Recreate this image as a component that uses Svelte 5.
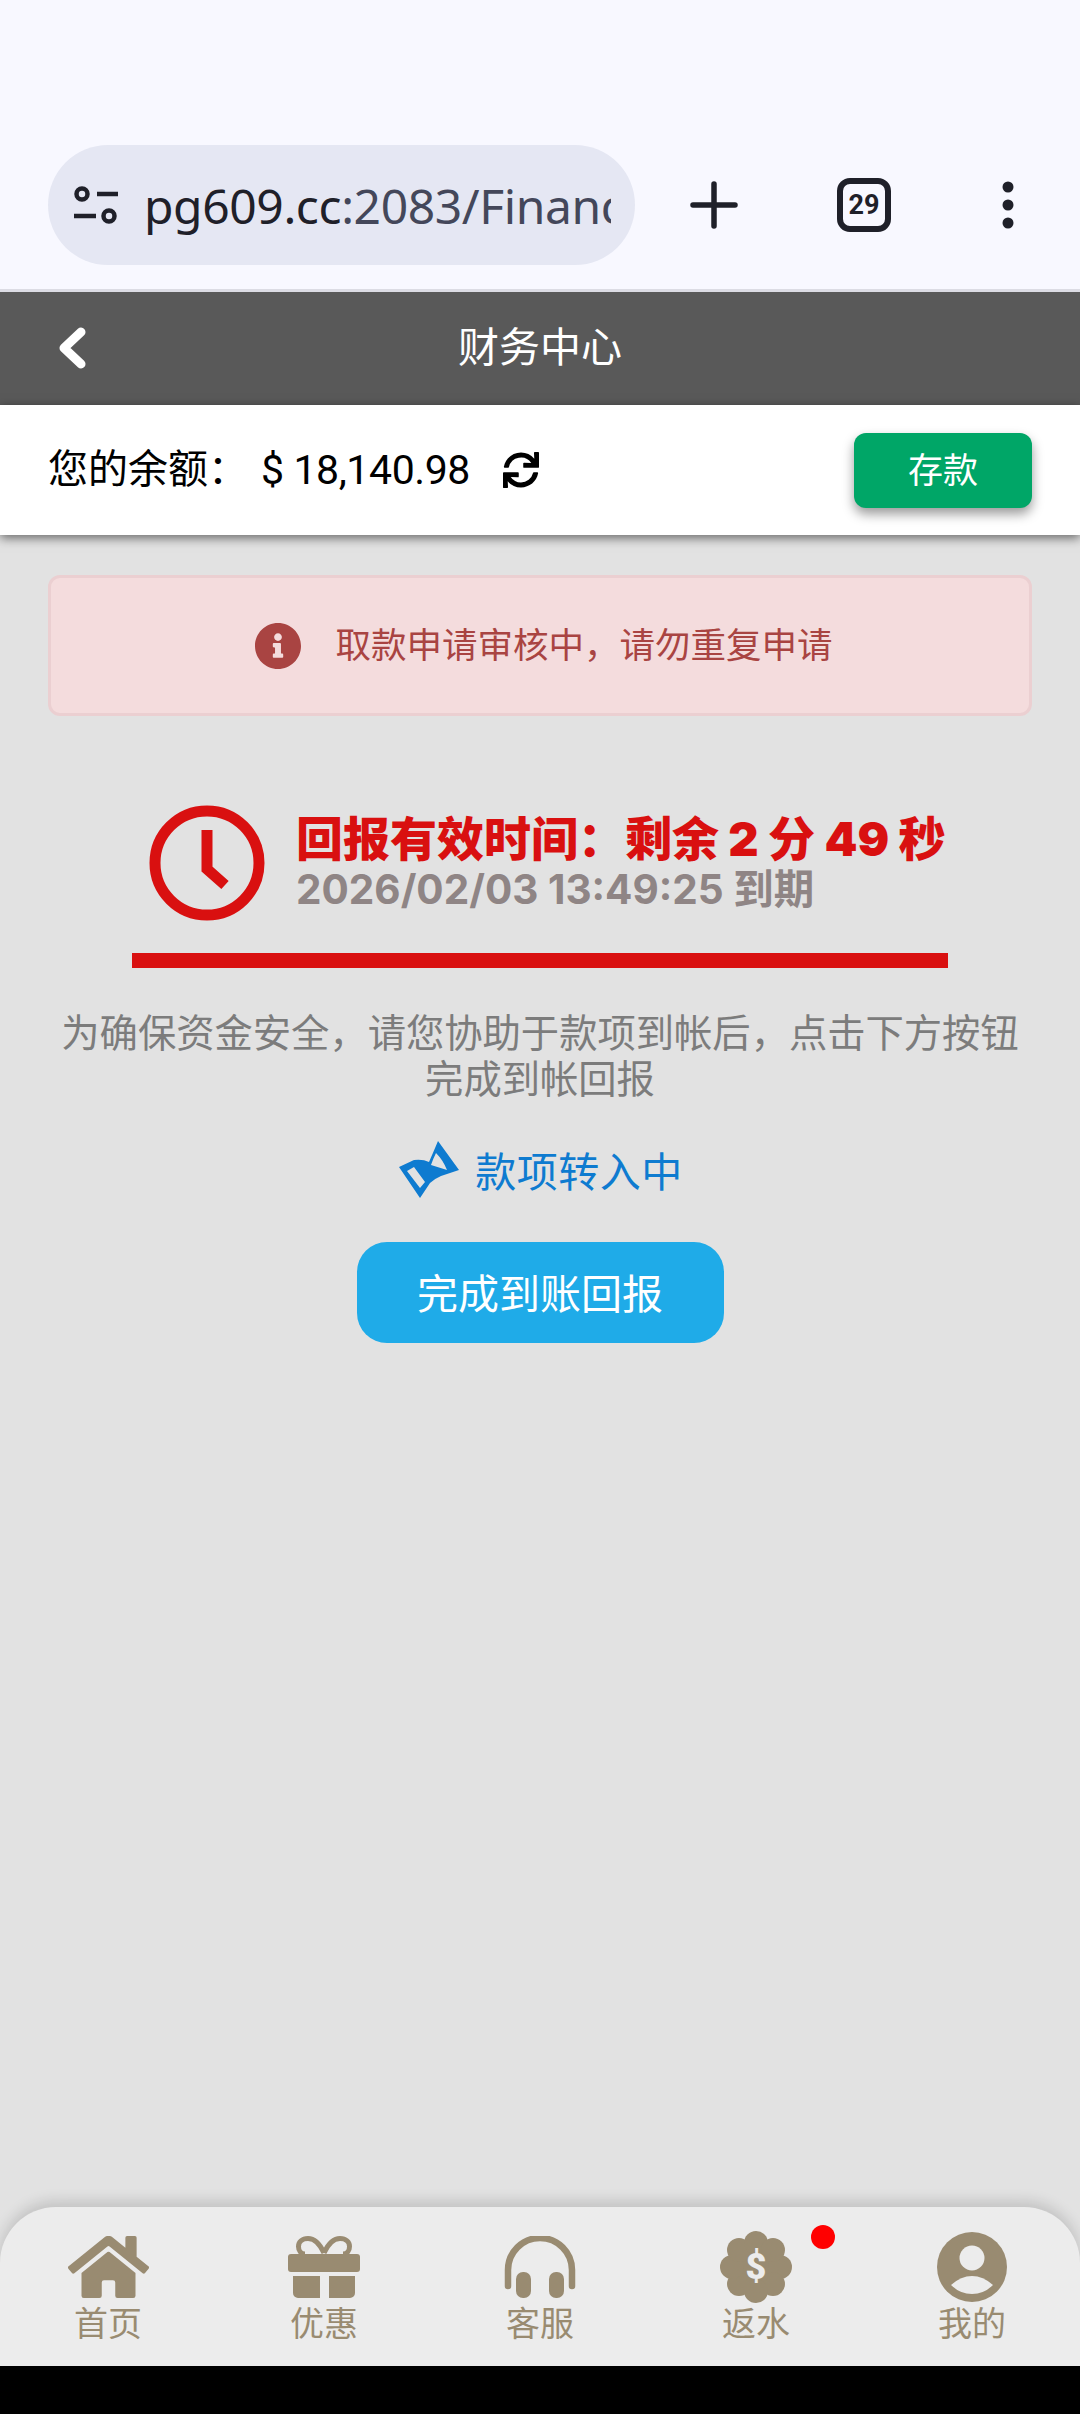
<script>
  const lobes = [0, 45, 90, 135, 180, 225, 270, 315].map((deg) => ({
    x: 36 + 24 * Math.cos((deg * Math.PI) / 180),
    y: 36 + 24 * Math.sin((deg * Math.PI) / 180)
  }));
</script>

<div class="page">
  <div class="chrome">
    <div class="pill">
      <svg class="tune" width="44" height="38" viewBox="0 0 44 38" fill="none" stroke="#1f2029" stroke-width="4.5">
        <circle cx="8" cy="8" r="5.5"></circle>
        <path d="M23 8h21M0 30h22"></path>
        <circle cx="35" cy="30" r="5.5"></circle>
      </svg>
      <div class="url"><span class="host">pg609.cc</span>:2083/Finance</div>
    </div>
    <div class="chrome-actions">
      <svg width="48" height="48" viewBox="0 0 48 48" fill="none" stroke="#1f2029" stroke-width="5.5" stroke-linecap="round">
        <path d="M24 3v42M3 24h42"></path>
      </svg>
      <div class="tabs">29</div>
      <svg class="dots" width="12" height="48" viewBox="0 0 12 48" fill="#1f2029">
        <circle cx="6" cy="6" r="5.5"></circle>
        <circle cx="6" cy="24" r="5.5"></circle>
        <circle cx="6" cy="42" r="5.5"></circle>
      </svg>
    </div>
  </div>

  <header class="topbar">
    <svg class="back" width="30" height="42" viewBox="0 0 30 42" fill="none" stroke="#fff" stroke-width="9" stroke-linecap="round" stroke-linejoin="round">
      <path d="M24 5L7 21l17 16"></path>
    </svg>
    <span>财务中心</span>
  </header>

  <div class="balance">
    <span class="balance-label">您的余额：</span>
    <span class="amount">$ 18,140.98</span>
    <svg class="refresh" width="36" height="36" viewBox="0 0 512 512" fill="#000">
      <path d="M440.65 12.57l4 82.77A247.16 247.16 0 0 0 255.83 8C134.73 8 33.91 94.92 12.29 209.82A12 12 0 0 0 24.09 224h49.05a12 12 0 0 0 11.67-9.26 175.91 175.91 0 0 1 317-56.94l-101.46-4.86a12 12 0 0 0-12.57 12v47.41a12 12 0 0 0 12 12H500a12 12 0 0 0 12-12V12a12 12 0 0 0-12-12h-47.37a12 12 0 0 0-11.98 12.57zM255.83 432a175.61 175.61 0 0 1-146-77.8l101.8 4.87a12 12 0 0 0 12.57-12v-47.4a12 12 0 0 0-12-12H12a12 12 0 0 0-12 12V500a12 12 0 0 0 12 12h47.35a12 12 0 0 0 12-12.6l-4.15-82.57A247.17 247.17 0 0 0 255.83 504c121.11 0 221.93-86.92 243.55-201.82a12 12 0 0 0-11.8-14.18h-49.05a12 12 0 0 0-11.67 9.26A175.86 175.86 0 0 1 255.83 432z"></path>
    </svg>
    <button class="deposit">存款</button>
  </div>

  <main class="content">
    <div class="alert">
      <svg width="46" height="46" viewBox="8 8 496 496" fill="#a94442">
        <path d="M256 8C119.043 8 8 119.083 8 256c0 136.997 111.043 248 248 248s248-111.003 248-248C504 119.083 392.957 8 256 8zm0 110c23.196 0 42 18.804 42 42s-18.804 42-42 42-42-18.804-42-42 18.804-42 42-42zm56 254c0 6.627-5.373 12-12 12h-88c-6.627 0-12-5.373-12-12v-24c0-6.627 5.373-12 12-12h12v-64h-12c-6.627 0-12-5.373-12-12v-24c0-6.627 5.373-12 12-12h64c6.627 0 12 5.373 12 12v100h12c6.627 0 12 5.373 12 12v24z"></path>
      </svg>
      <span>取款申请审核中，请勿重复申请</span>
    </div>

    <div class="timer">
      <svg width="116" height="116" viewBox="0 0 116 116" fill="none" stroke="#d91010" stroke-width="11">
        <circle cx="58" cy="58" r="52"></circle>
        <path d="M58 25v39l18 16" stroke-width="11" stroke-linejoin="miter"></path>
      </svg>
      <div class="timer-text">
        <div class="timer-title">回报有效时间：剩余 2 分 49 秒</div>
        <div class="timer-date">2026/02/03 13:49:25 到期</div>
      </div>
    </div>
    <div class="redline"></div>

    <p class="notice">为确保资金安全，请您协助于款项到帐后，点击下方按钮完成到帐回报</p>

    <div class="pending">
      <svg width="64" height="64" viewBox="16 12 64 64" fill="#0e7bd0" fill-rule="evenodd">
        <path d="M18 40L33 33Q42 32 48 35Q52 26 57 14L78 43L60 49Q53 52 49 56L39 71ZM26 44L33 40L44 55L39 61ZM55 26Q52 32 50 38L66 43Q62 33 55 26Z"></path>
      </svg>
      <span>款项转入中</span>
    </div>

    <button class="confirm">完成到账回报</button>
  </main>

  <nav class="tabbar">
    <div class="tab">
      <div class="tab-icon">
        <svg width="81" height="62" viewBox="0 32 576 448" preserveAspectRatio="none" fill="#998b71">
          <path d="M280.37 148.26L96 300.11V464a16 16 0 0 0 16 16l112.06-.29a16 16 0 0 0 15.92-16V368a16 16 0 0 1 16-16h64a16 16 0 0 1 16 16v95.64a16 16 0 0 0 16 16.05L464 480a16 16 0 0 0 16-16V300L295.67 148.26a12.19 12.19 0 0 0-15.3 0zM571.6 251.47L488 182.56V44.05a12 12 0 0 0-12-12h-56a12 12 0 0 0-12 12v72.61L318.47 43a48 48 0 0 0-61 0L4.34 251.47a12 12 0 0 0-1.6 16.9l25.5 31A12 12 0 0 0 45.15 301l235.22-193.74a12.19 12.19 0 0 1 15.3 0L530.9 301a12 12 0 0 0 16.9-1.6l25.5-31a12 12 0 0 0-1.7-16.93z"></path>
        </svg>
      </div>
      <span>首页</span>
    </div>
    <div class="tab">
      <div class="tab-icon">
        <svg width="72" height="62" viewBox="0 0 72 62" fill="#998b71">
          <path d="M36 17C31 6 26 2.500 20 2.500 14 2.500 10.500 6 10.500 10.500 10.500 15 13 18 17 18M36 17C41 6 46 2.500 52 2.500 58 2.500 61.500 6 61.500 10.500 61.500 15 59 18 55 18" fill="none" stroke="#998b71" stroke-width="5"></path>
          <rect x="0" y="18" width="72" height="18" rx="3"></rect>
          <path d="M5 40h27v22H10a5 5 0 0 1-5-5zM41 40h26v17a5 5 0 0 1-5 5H41z"></path>
        </svg>
      </div>
      <span>优惠</span>
    </div>
    <div class="tab">
      <div class="tab-icon">
        <svg width="72" height="62" viewBox="0 0 72 62" fill="#998b71">
          <path d="M4 50V34a32 32 0 0 1 64 0v16" fill="none" stroke="#998b71" stroke-width="6.500" stroke-linecap="round"></path>
          <rect x="12" y="36" width="15" height="26" rx="7"></rect>
          <rect x="45" y="36" width="15" height="26" rx="7"></rect>
        </svg>
      </div>
      <span>客服</span>
    </div>
    <div class="tab">
      <div class="tab-icon">
        <svg width="72" height="72" viewBox="0 0 72 72" fill="#998b71">
          <circle cx="36" cy="36" r="27"></circle>
          {#each lobes as lobe}
            <circle cx={lobe.x} cy={lobe.y} r="12"></circle>
          {/each}
          <text x="36" y="48" text-anchor="middle" class="dollar">$</text>
        </svg>
      </div>
      <span>返水</span>
      <i class="dot"></i>
    </div>
    <div class="tab">
      <div class="tab-icon">
        <svg width="70" height="70" viewBox="0 0 70 70" fill="#ececec">
          <circle cx="35" cy="35" r="35" fill="#998b71"></circle>
          <circle cx="35" cy="26" r="12.500"></circle>
          <path d="M14 53Q24 44 35 44T56 53Q47 62 35 62T14 53Z"></path>
        </svg>
      </div>
      <span>我的</span>
    </div>
  </nav>
  <div class="navbar"></div>
</div>

<style>
  :global(body) {
    margin: 0;
    background: #e2e2e2;
  }

  .page {
    height: 2414px;
    display: flex;
    flex-direction: column;
    font-family: Roboto, "Noto Sans CJK SC", sans-serif;
    overflow: hidden;
  }

  .chrome {
    height: 289px;
    flex-shrink: 0;
    padding-left: 48px;
    display: flex;
    align-items: flex-end;
    background: #f8f8ff;
    border-bottom: 3px solid #dcdce4;
  }

  .pill {
    width: 587px;
    height: 120px;
    margin-bottom: 24px;
    box-sizing: border-box;
    border-radius: 60px;
    background: #e5e7f3;
    display: flex;
    align-items: center;
    padding: 0 24px 0 26px;
    gap: 26px;
  }

  .tune {
    flex-shrink: 0;
  }

  .url {
    width: 467px;
    overflow: hidden;
    white-space: nowrap;
    font-size: 48px;
    color: #44475a;
    font-family: "Noto Sans", Roboto, sans-serif;
    letter-spacing: -0.4px;
  }

  .host {
    color: #1f2029;
  }

  .chrome-actions {
    flex: 1;
    height: 120px;
    margin-bottom: 24px;
    display: flex;
    align-items: center;
  }

  .chrome-actions svg:first-child {
    margin-left: 55px;
  }

  .tabs {
    margin-left: 99px;
    width: 54px;
    height: 54px;
    box-sizing: border-box;
    border: 6px solid #1f2029;
    border-radius: 13px;
    display: flex;
    align-items: center;
    justify-content: center;
    font-size: 27px;
    font-weight: 700;
    color: #1f2029;
  }

  .dots {
    margin-left: 111px;
  }

  .topbar {
    height: 113px;
    flex-shrink: 0;
    background: #595959;
    color: #fff;
    font-size: 41px;
    display: flex;
    align-items: center;
    justify-content: center;
    position: relative;
  }

  .topbar span {
    padding-bottom: 9px;
  }

  .back {
    position: absolute;
    left: 57px;
    top: 35px;
  }

  .balance {
    height: 130px;
    flex-shrink: 0;
    box-sizing: border-box;
    padding: 0 48px;
    background: #fff;
    display: flex;
    align-items: center;
    color: #000;
    box-shadow: 0 3px 10px rgba(0, 0, 0, 0.55);
    position: relative;
  }

  .balance-label {
    width: 213px;
    padding-bottom: 8px;
    white-space: nowrap;
    font-size: 40px;
  }

  .amount {
    font-size: 41px;
    letter-spacing: -0.4px;
  }

  .refresh {
    margin-left: 33px;
  }

  .deposit {
    margin-left: auto;
    width: 178px;
    height: 75px;
    padding-bottom: 6px;
    border: none;
    border-radius: 12px;
    background: #00a667;
    color: #fff;
    font-family: inherit;
    font-size: 35px;
    box-shadow: 0 6px 12px rgba(0, 0, 0, 0.4);
  }

  .content {
    flex: 1;
    background: #e2e2e2;
    padding: 40px 48px 0 48px;
    display: flex;
    flex-direction: column;
    align-items: center;
  }

  .alert {
    align-self: stretch;
    height: 141px;
    box-sizing: border-box;
    padding-left: 8px;
    border: 3px solid #ebcfd1;
    border-radius: 12px;
    background: #f4dcdd;
    color: #a94442;
    font-size: 35.500px;
    display: flex;
    align-items: center;
    justify-content: center;
    gap: 34px;
  }

  .alert span {
    padding-bottom: 6px;
  }

  .timer {
    width: 816px;
    box-sizing: border-box;
    margin-top: 89px;
    padding-left: 17px;
    display: flex;
    align-items: center;
    gap: 31px;
  }

  .timer svg {
    flex-shrink: 0;
  }

  .timer-title {
    font-family: Inter, "Noto Sans CJK SC", sans-serif;
    font-size: 47px;
    font-weight: 900;
    line-height: 54px;
    color: #d91010;
    white-space: nowrap;
  }

  .timer-date {
    font-family: Inter, "Noto Sans CJK SC", sans-serif;
    font-size: 40.500px;
    font-weight: 700;
    line-height: 48px;
    color: #8f8585;
    white-space: nowrap;
  }

  .redline {
    width: 816px;
    height: 15px;
    margin-top: 32px;
    background: #d91010;
  }

  .notice {
    margin: 43px 0 0;
    width: 984px;
    text-align: center;
    font-size: 38.300px;
    line-height: 46px;
    color: #7c7c7c;
  }

  .pending {
    margin-top: 36px;
    display: flex;
    align-items: center;
    gap: 14px;
    color: #0e7bd0;
    font-size: 41px;
    letter-spacing: 0.5px;
  }

  .pending span {
    padding-bottom: 4px;
  }

  .confirm {
    margin-top: 39px;
    width: 367px;
    height: 101px;
    padding-bottom: 4px;
    border: none;
    border-radius: 30px;
    background: #1fabe8;
    color: #fff;
    font-family: inherit;
    font-size: 41px;
  }

  .tabbar {
    height: 159px;
    flex-shrink: 0;
    box-sizing: border-box;
    padding-top: 24px;
    background: #ececec;
    border-radius: 56px 56px 0 0;
    box-shadow: 0 -6px 14px rgba(0, 0, 0, 0.14);
    display: grid;
    grid-template-columns: repeat(5, 1fr);
    position: relative;
  }

  .tab {
    position: relative;
    display: flex;
    flex-direction: column;
    align-items: center;
    color: #998b71;
    font-size: 34px;
    line-height: 36px;
  }

  .tab-icon {
    height: 72px;
    margin-bottom: 3px;
    display: flex;
    align-items: center;
    justify-content: center;
  }

  .dollar {
    font-family: Roboto, sans-serif;
    font-size: 36px;
    font-weight: 900;
    fill: #ececec;
  }

  .dot {
    position: absolute;
    left: 163px;
    top: -6px;
    width: 24px;
    height: 24px;
    border-radius: 50%;
    background: #f00;
  }

  .navbar {
    height: 48px;
    flex-shrink: 0;
    background: #000;
    position: relative;
  }
</style>
